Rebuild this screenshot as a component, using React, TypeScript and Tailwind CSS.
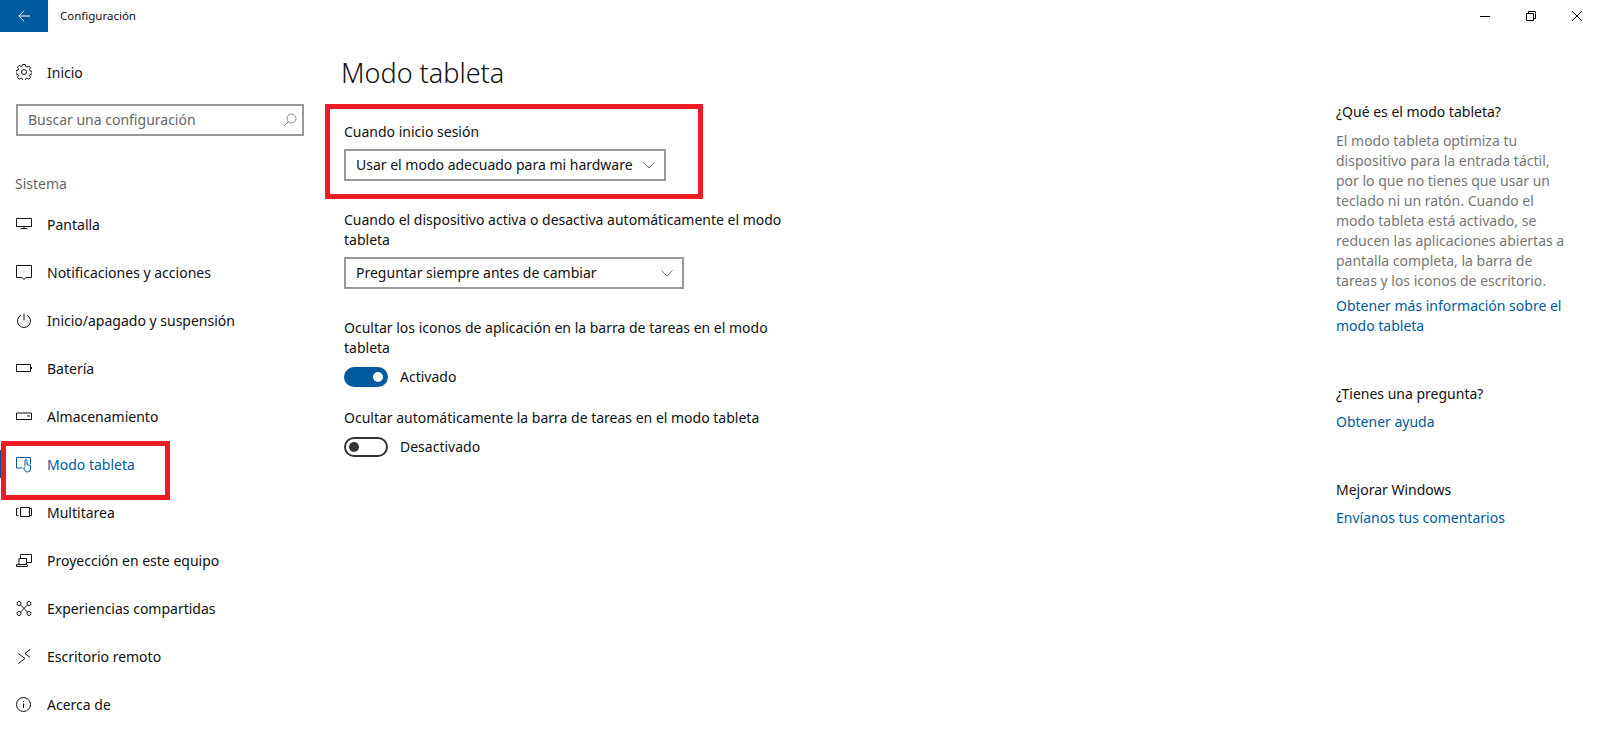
const font = "[font-family:'Noto_Sans','Open_Sans',sans-serif]";

function Icon({ children, className = 'text-[#111]' }: { children: React.ReactNode; className?: string }) {
  return (
    <svg width="16" height="16" viewBox="0 0 16 16" fill="none" stroke="currentColor" strokeWidth="1" className={className}>
      {children}
    </svg>
  );
}

const navItems: { label: string; icon: React.ReactNode; active?: boolean }[] = [
  {
    label: 'Pantalla',
    icon: <path d="M.5 1.500h15v8H.5zM8 9.500v2M4.500 11.500h7" />,
  },
  {
    label: 'Notificaciones y acciones',
    icon: <path d="M.5.5h15v12h-5.500l-2 2-2-2H.5z" />,
  },
  {
    label: 'Inicio/apagado y suspensión',
    icon: (
      <>
        <path d="M5 2.200a6.500 6.500 0 1 0 6 0" />
        <path d="M8 .5v7" />
      </>
    ),
  },
  {
    label: 'Batería',
    icon: <path d="M.5 3.500h14v7H.5zM15.500 6v2" />,
  },
  {
    label: 'Almacenamiento',
    icon: <path d="M.5 4h15v6.500H.5zM11 7h3" />,
  },
  {
    label: 'Modo tableta',
    active: true,
    icon: (
      <>
        <path d="M6.500 11H.5V.5h14V7" />
        <path d="M9 9.500V3.500a1 1 0 0 1 2 0v4l3.500 1v3.500a3 3 0 0 1-3 3h-1l-3-3.500 1.500-1" />
      </>
    ),
  },
  {
    label: 'Multitarea',
    icon: <path d="M4.500 2.500h9v9h-9zM2.500 3.500H.5v7h2M13.500 3.500h2v7h-2" />,
  },
  {
    label: 'Proyección en este equipo',
    icon: <path d="M4.500 5V1.500h11v8H11M3 5.500h7.500v6H3zM.5 13.500h11v-2M.5 13.500v-2H3" />,
  },
  {
    label: 'Experiencias compartidas',
    icon: (
      <>
        <circle cx="3" cy="2.500" r="2" />
        <circle cx="13" cy="2.500" r="2" />
        <circle cx="3" cy="12.500" r="2" />
        <circle cx="13" cy="12.500" r="2" />
        <path d="M4.500 4l7 7M11.500 4l-7 7" />
      </>
    ),
  },
  {
    label: 'Escritorio remoto',
    icon: <path d="M2.300 4.500l6.700 5-6.700 5M14 .5L9 4.500l5 4" />,
  },
  {
    label: 'Acerca de',
    icon: (
      <>
        <circle cx="7.500" cy="7.500" r="7" />
        <path d="M7.500 6.500v4.500M7.500 4v1.200" />
      </>
    ),
  },
];

function Dropdown({ label, widthClass }: { label: string; widthClass: string }) {
  return (
    <div className={`${widthClass} h-8 border-2 border-[#999] flex items-center justify-between pl-[10px] pr-[9px] text-[#111]`}>
      <span>{label}</span>
      <svg width="12" height="7" viewBox="0 0 12 7" fill="none" stroke="#777" strokeWidth="1">
        <path d="M.5.5L6 6l5.500-5.500" />
      </svg>
    </div>
  );
}

function Toggle({ on, label }: { on: boolean; label: string }) {
  return (
    <div className="flex items-center h-5 gap-3">
      {on ? (
        <div className="w-11 h-5 rounded-full bg-[#005a9e] flex items-center justify-end pr-[5px]">
          <div className="w-[10px] h-[10px] rounded-full bg-white" />
        </div>
      ) : (
        <div className="w-11 h-5 rounded-full border-2 border-[#333] flex items-center pl-[3px]">
          <div className="w-[10px] h-[10px] rounded-full bg-[#333]" />
        </div>
      )}
      <span className="text-[#111]">{label}</span>
    </div>
  );
}

export default function App() {
  return (
    <div className={`${font} relative flex flex-col w-full h-[738px] overflow-hidden bg-white text-[14px] leading-5 text-[#111]`}>
      <header className="flex h-8 items-center shrink-0">
        <div className="w-12 h-8 bg-[#005a9e] flex items-center justify-center">
          <svg width="12" height="12" viewBox="0 0 12 12" fill="none" stroke="white" strokeWidth="1">
            <path d="M6 .8L.8 6 6 11.200M.8 6H12" />
          </svg>
        </div>
        <span className="ml-3 text-[11.500px] text-[#111]">Configuración</span>
        <div className="ml-auto flex items-center">
          <div className="w-[46px] h-8 flex items-center justify-center">
            <div className="w-[10px] h-px bg-black" />
          </div>
          <div className="w-[46px] h-8 flex items-center justify-center">
            <svg width="10" height="10" viewBox="0 0 10 10" fill="none" stroke="black" strokeWidth="1">
              <path d="M.5 2.500h7v7h-7zM2.500 2.500v-2h7v7h-2" />
            </svg>
          </div>
          <div className="w-[46px] h-8 flex items-center justify-center">
            <svg width="10" height="10" viewBox="0 0 10 10" fill="none" stroke="black" strokeWidth="1">
              <path d="M0 0l10 10M10 0L0 10" />
            </svg>
          </div>
        </div>
      </header>

      <div className="flex flex-1 min-h-0">
        <aside className="w-[320px] shrink-0 pt-4">
          <div className="h-12 flex items-center pl-4 gap-[15px]">
            <Icon>
              <circle cx="8" cy="8" r="2.500" />
              <path d="M6.700.5h2.600l.4 2 1.300.6 1.800-1.100 1.800 1.800-1.100 1.800.6 1.300 2 .4v2.600l-2 .4-.6 1.300 1.100 1.800-1.800 1.800-1.800-1.100-1.300.6-.4 2H6.700l-.4-2-1.300-.6-1.800 1.100-1.800-1.800 1.100-1.800-.6-1.300-2-.4V6.700l2-.4.6-1.300L1.400 3.200l1.800-1.800L5 2.500l1.300-.6z" />
            </Icon>
            <span className="mt-[1px]">Inicio</span>
          </div>
          <div className="mx-4 mt-2 h-8 border-2 border-[#999] flex items-center justify-between pl-[10px] pr-[5px] text-[#666]">
            <span>Buscar una configuración</span>
            <svg width="14" height="14" viewBox="0 0 14 14" fill="none" stroke="#888" strokeWidth="1">
              <circle cx="8.500" cy="5.500" r="4.500" />
              <path d="M5.200 8.800L.8 13.200" />
            </svg>
          </div>
          <div className="mt-[38px] mb-[7px] pl-[15px] h-5 text-[#666]">Sistema</div>
          <nav className="flex flex-col">
            {navItems.map((item) => (
              <div key={item.label} className={`relative h-12 flex items-center pl-4 gap-[15px] ${item.active ? 'text-[#005a9e]' : 'text-[#111]'}`}>
                {item.active && <div className="absolute left-0 top-[9px] w-[2px] h-7 bg-[#005a9e]" />}
                <Icon className={item.active ? 'text-[#005a9e]' : 'text-[#111]'}>{item.icon}</Icon>
                <span>{item.label}</span>
              </div>
            ))}
          </nav>
        </aside>

        <main className="flex-1 min-w-0 pl-6">
          <h1 className="text-[27px] leading-9 font-light text-[#111] mt-[23px] -ml-[3px]">Modo tableta</h1>
          <section className="mt-[31px]">
            <div className="h-5 mt-[1px]">Cuando inicio sesión</div>
            <div className="mt-[7px]">
              <Dropdown label="Usar el modo adecuado para mi hardware" widthClass="w-[322px]" />
            </div>
          </section>
          <section className="mt-[29px] w-[460px]">
            <p>Cuando el dispositivo activa o desactiva automáticamente el modo tableta</p>
            <div className="mt-[7px]">
              <Dropdown label="Preguntar siempre antes de cambiar" widthClass="w-[340px]" />
            </div>
          </section>
          <section className="mt-[29px] w-[460px]">
            <p>Ocultar los iconos de aplicación en la barra de tareas en el modo tableta</p>
            <div className="mt-[9px]">
              <Toggle on label="Activado" />
            </div>
          </section>
          <section className="mt-[21px] w-[460px]">
            <p>Ocultar automáticamente la barra de tareas en el modo tableta</p>
            <div className="mt-[9px]">
              <Toggle on={false} label="Desactivado" />
            </div>
          </section>
        </main>

        <aside className="w-[264px] shrink-0 pt-[70px] pr-8">
          <h2 className="h-5">¿Qué es el modo tableta?</h2>
          <p className="mt-[9px] text-[#777]">
            El modo tableta optimiza tu dispositivo para la entrada táctil, por lo que no tienes que usar un teclado ni un ratón. Cuando el modo tableta está activado, se reducen las aplicaciones abiertas a pantalla completa, la barra de tareas y los iconos de escritorio.
          </p>
          <p className="mt-[5px] text-[#005a9e]">Obtener más información sobre el modo tableta</p>
          <h2 className="mt-[48px] h-5">¿Tienes una pregunta?</h2>
          <p className="mt-2 text-[#005a9e]">Obtener ayuda</p>
          <h2 className="mt-[48px] h-5">Mejorar Windows</h2>
          <p className="mt-2 text-[#005a9e]">Envíanos tus comentarios</p>
        </aside>
      </div>

      {/* red annotation boxes drawn over the screenshot */}
      <div className="absolute left-[1px] top-[441px] w-[169px] h-[59px] border-[5px] border-[#ed1c24]" />
      <div className="absolute left-[325px] top-[104px] w-[378px] h-[95px] border-[5px] border-[#ed1c24]" />
    </div>
  );
}
